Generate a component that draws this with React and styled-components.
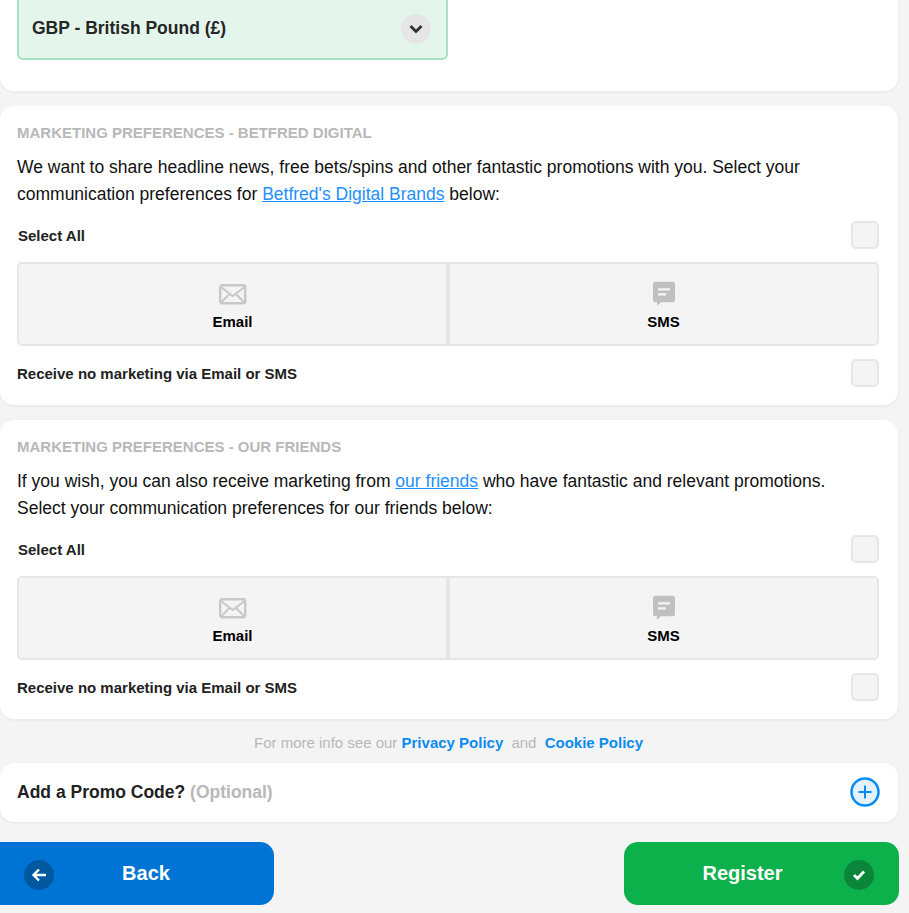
import React from 'react'
import styled, { createGlobalStyle } from 'styled-components'

const GlobalStyle = createGlobalStyle`
  html, body {
    margin: 0;
    padding: 0;
    background: #f4f4f4;
    font-family: "Liberation Sans", Arial, sans-serif;
  }
  * { box-sizing: border-box; }
`

const Page = styled.div`
  width: 909px;
  height: 913px;
  overflow: hidden;
  display: flex;
  flex-direction: column;
`

const Stack = styled.div`
  width: 898px;
  display: flex;
  flex-direction: column;
  gap: 15px;
`

const Card = styled.section`
  background: #fff;
  border-radius: 14px;
  box-shadow: 0 1px 1px 1px #ececec;
  padding: 18px 19px 18px 17px;
  height: 299px;
`

const CurrencyCard = styled(Card)`
  border-radius: 0 0 14px 14px;
  padding: 0 0 31px 17px;
  height: 91px;
`

const Select = styled.div`
  width: 431px;
  height: 60px;
  padding: 0 15px 0 13px;
  display: flex;
  align-items: center;
  justify-content: space-between;
  background: #e4f6ec;
  border: 2px solid #a6e2bf;
  border-top: none;
  border-radius: 0 0 6px 6px;
  font-size: 17.5px;
  font-weight: 700;
  color: #262626;
`

const SelectLabel = styled.span`
  margin-bottom: 2px;
`

const Chevron = styled.span`
  width: 30px;
  height: 30px;
  border-radius: 50%;
  background: #e6e6e6;
  display: flex;
  align-items: center;
  justify-content: center;
`

const Heading = styled.h3`
  margin: 0;
  font-size: 15px;
  line-height: 17px;
  font-weight: 700;
  color: #b8b8b8;
  text-transform: uppercase;
`

const Intro = styled.p`
  margin: 13px 0 0;
  padding-right: 10px;
  font-size: 17.5px;
  line-height: 27px;
  color: #111;
`

const TextLink = styled.a`
  color: #1e90ff;
  text-decoration: underline;
`

const CheckRow = styled.div`
  display: flex;
  align-items: center;
  justify-content: space-between;
  height: 28px;
  margin-top: ${props => props.$top}px;
  padding-left: ${props => props.$inset}px;
  font-size: 15px;
  font-weight: 700;
  color: #222;
`

const Box = styled.span`
  width: 28px;
  height: 28px;
  background: #f4f4f4;
  border: 2px solid #e6e6e6;
  border-radius: 5px;
`

const Channels = styled.div`
  display: grid;
  grid-template-columns: 1fr 1fr;
  margin-top: 13px;
`

const Channel = styled.div`
  height: 84px;
  padding-top: 19px;
  display: flex;
  flex-direction: column;
  align-items: center;
  background: #f4f4f4;
  border: 2px solid #e6e6e6;
  border-radius: ${props => props.$side === 'left' ? '5px 0 0 5px' : '0 5px 5px 0'};
  font-size: 15px;
  font-weight: 700;
  color: #000;
`

const ChannelIcon = styled.svg`
  display: block;
  width: 28px;
  height: 24px;
  margin-bottom: 6px;
  overflow: visible;
`

const InfoLine = styled.div`
  height: 44px;
  padding: 15px 8px 0 0;
  text-align: center;
  font-size: 15px;
  line-height: 17px;
  color: #b8b8b8;
`

const InfoLink = styled.a`
  color: #0a8cf0;
  font-weight: 700;
  margin: 0 4px 0 ${props => props.$left}px;
`

const PromoCard = styled.div`
  width: 898px;
  height: 59px;
  padding: 0 18px 0 17px;
  background: #fff;
  border-radius: 14px;
  box-shadow: 0 1px 1px 1px #ececec;
  display: flex;
  align-items: center;
  justify-content: space-between;
  font-size: 17.5px;
  font-weight: 700;
  color: #222;
`

const Optional = styled.span`
  color: #b8b8b8;
`

const PlusIcon = styled.svg`
  width: 30px;
  height: 30px;
  display: block;
  margin-bottom: 1px;
`

const Actions = styled.div`
  width: 899px;
  margin-top: 20px;
  display: flex;
  justify-content: space-between;
`

const ActionButton = styled.div`
  position: relative;
  width: ${props => props.$width}px;
  height: 63px;
  padding: 0 ${props => props.$padRight}px 0 ${props => props.$padLeft}px;
  display: flex;
  align-items: center;
  justify-content: center;
  background: ${props => props.$color};
  border-radius: ${props => props.$flushLeft ? '0 14px 14px 0' : '14px'};
  color: #fff;
  font-size: 20px;
  font-weight: 700;
`

// round badge sitting on top of the button
const ButtonBadge = styled.span`
  position: absolute;
  top: 18px;
  ${props => props.$side}: ${props => props.$offset}px;
  width: 30px;
  height: 30px;
  border-radius: 50%;
  background: ${props => props.$color};
  display: flex;
  align-items: center;
  justify-content: center;
`

const EmailGlyph = () => (
  <ChannelIcon viewBox="0 0 28 24">
    <rect x="1.200" y="2.200" width="25" height="18" rx="2" fill="none" stroke="#c8c8c8" strokeWidth="2.400" />
    <path d="M2 4l11.700 9L25.500 4M2.500 19l8-8M25 19l-8-8" fill="none" stroke="#c8c8c8" strokeWidth="2" />
  </ChannelIcon>
)

const SmsGlyph = () => (
  <ChannelIcon viewBox="0 0 28 24">
    <g transform="translate(0 -1.300)">
      <path d="M5.500 0h17a2.500 2.500 0 0 1 2.500 2.500v15.500a2.500 2.500 0 0 1-2.500 2.500h-11.500l-4 3.500v-3.500h-1.500a2.500 2.500 0 0 1-2.500-2.500v-15.500a2.500 2.500 0 0 1 2.500-2.500z" fill="#c0c0c0" />
      <path d="M8 6.500h12v2.200h-12zM8 11.500h8v2.200h-8z" fill="#f4f4f4" />
    </g>
  </ChannelIcon>
)

const PreferenceCard = ({ title, children }) => (
  <Card>
    <Heading>{title}</Heading>
    <Intro>{children}</Intro>
    <CheckRow $top={13} $inset={1}>Select All<Box /></CheckRow>
    <Channels>
      <Channel $side="left"><EmailGlyph />Email</Channel>
      <Channel $side="right"><SmsGlyph />SMS</Channel>
    </Channels>
    <CheckRow $top={13} $inset={0}>Receive no marketing via Email or SMS<Box /></CheckRow>
  </Card>
)

export default function App() {
  return (
    <Page>
      <GlobalStyle />
      <Stack>
        <CurrencyCard>
          <Select>
            <SelectLabel>GBP - British Pound (£)</SelectLabel>
            <Chevron>
              <svg width="14" height="10" viewBox="0 0 14 10">
                <path d="M1.500 2l5.500 5.500 5.500-5.500" fill="none" stroke="#333" strokeWidth="2.800" />
              </svg>
            </Chevron>
          </Select>
        </CurrencyCard>
        <PreferenceCard title="Marketing Preferences - Betfred Digital">
          We want to share headline news, free bets/spins and other fantastic promotions with you. Select your communication preferences for <TextLink>Betfred's Digital Brands</TextLink> below:
        </PreferenceCard>
        <PreferenceCard title="Marketing Preferences - Our Friends">
          If you wish, you can also receive marketing from <TextLink>our friends</TextLink> who have fantastic and relevant promotions. Select your communication preferences for our friends below:
        </PreferenceCard>
      </Stack>
      <InfoLine>
        For more info see our <InfoLink $left={0}>Privacy Policy</InfoLink> and <InfoLink $left={4}>Cookie Policy</InfoLink>
      </InfoLine>
      <PromoCard>
        <span>Add a Promo Code? <Optional>(Optional)</Optional></span>
        <PlusIcon viewBox="0 0 30 30">
          <circle cx="15" cy="15" r="13.500" fill="#e4f2ff" stroke="#0a8cf0" strokeWidth="2.500" />
          <path d="M15 8.500v13M8.500 15h13" stroke="#0a8cf0" strokeWidth="2" />
        </PlusIcon>
      </PromoCard>
      <Actions>
        <ActionButton $width={274} $padLeft={18} $padRight={0} $color="#0074d4" $flushLeft>
          <ButtonBadge $side="left" $offset={24} $color="#00589f">
            <svg width="16" height="14" viewBox="0 0 16 14">
              <path d="M15 7H3M8 1.500L2.500 7 8 12.500" fill="none" stroke="#fff" strokeWidth="2.400" />
            </svg>
          </ButtonBadge>
          Back
        </ActionButton>
        <ActionButton $width={275} $padLeft={0} $padRight={38} $color="#0cb14b">
          Register
          <ButtonBadge $side="right" $offset={25} $color="#0a853a">
            <svg width="14" height="12" viewBox="0 0 14 12">
              <path d="M2 6l3.500 3.500L12 2.500" fill="none" stroke="#fff" strokeWidth="2.800" />
            </svg>
          </ButtonBadge>
        </ActionButton>
      </Actions>
    </Page>
  )
}
